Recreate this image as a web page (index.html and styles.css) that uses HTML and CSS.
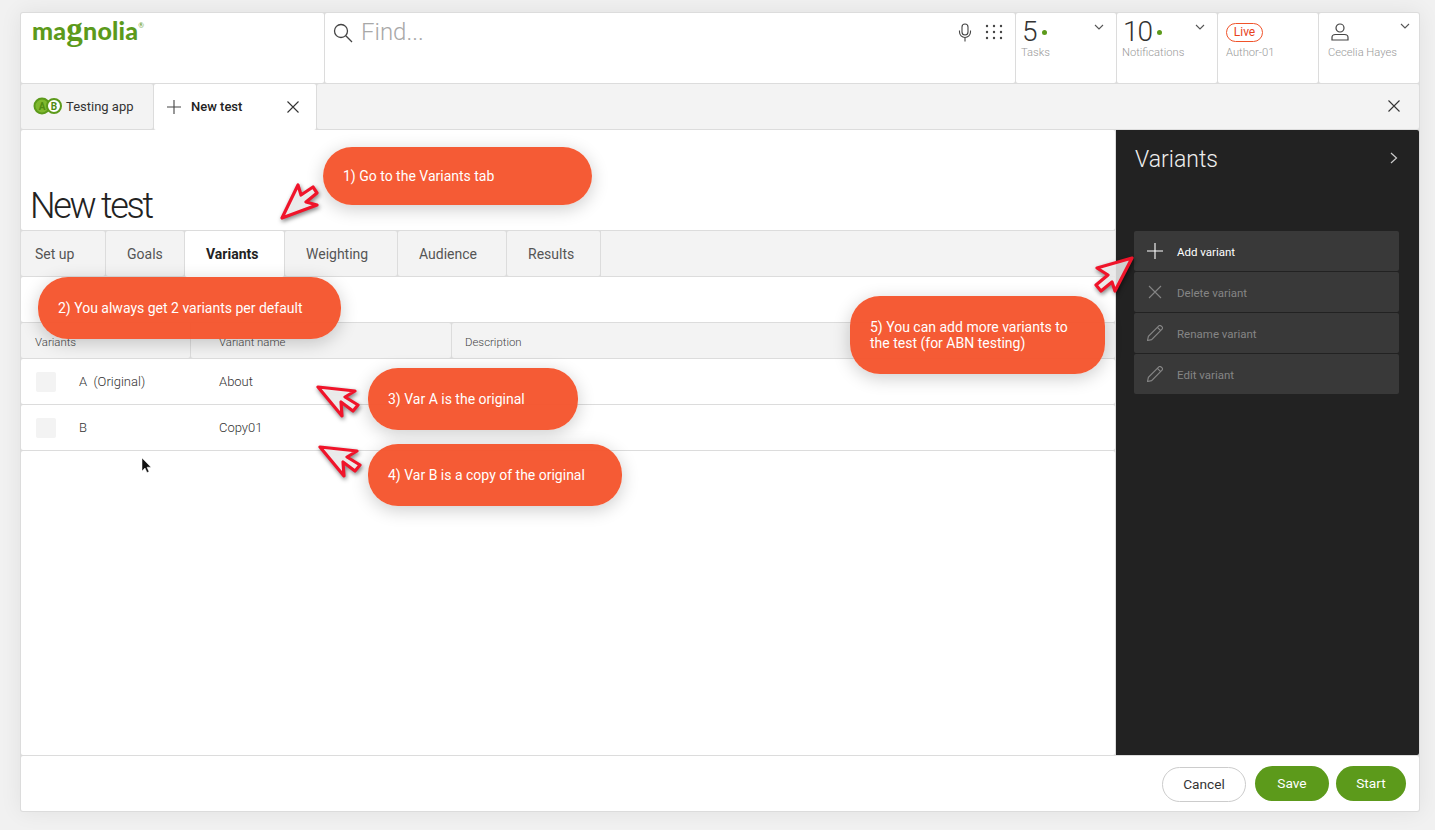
FILE: index.html
```html
<!DOCTYPE html>
<html lang="en">
<head>
<meta charset="utf-8">
<title>New test</title>
<link rel="stylesheet" href="styles.css">
</head>
<body>
<div class="frame">
  <header class="topbar">
    <div class="cell logo-cell">
      <div class="logo">ma<span class="logo-g">g</span>nolia<sup class="logo-r">®</sup></div>
    </div>
    <div class="cell search">
      <svg class="search-icon" width="20" height="20" viewBox="0 0 20 20"><circle cx="8" cy="8" r="6.5" fill="none" stroke="#444" stroke-width="1.3"/><path d="M12.8 12.8L19 19" stroke="#444" stroke-width="1.3" fill="none"/></svg>
      <span class="find">Find...</span>
      <svg class="mic" width="14" height="19" viewBox="0 0 14 19"><rect x="4" y="1" width="6" height="11" rx="3" fill="none" stroke="#444" stroke-width="1.1"/><path d="M1.5 7.5v1.5a5.500 5.500 0 0 0 11 0v-1.500M7 14.500v4" fill="none" stroke="#444" stroke-width="1.1"/></svg>
      <svg class="apps" width="18" height="16" viewBox="0 0 18 16"><g fill="#444"><circle cx="2" cy="2" r="1.200"/><circle cx="9" cy="2" r="1.200"/><circle cx="16" cy="2" r="1.200"/><circle cx="2" cy="8" r="1.200"/><circle cx="9" cy="8" r="1.200"/><circle cx="16" cy="8" r="1.200"/><circle cx="2" cy="14" r="1.200"/><circle cx="9" cy="14" r="1.200"/><circle cx="16" cy="14" r="1.200"/></g></svg>
    </div>
    <div class="cell stat">
      <div class="stat-top"><span class="num">5</span><span class="dot"></span><svg class="chev" width="10" height="6" viewBox="0 0 10 6"><path d="M1 1l4 4 4-4" fill="none" stroke="#555" stroke-width="1.100"/></svg></div>
      <div class="stat-label">Tasks</div>
    </div>
    <div class="cell stat">
      <div class="stat-top"><span class="num">10</span><span class="dot"></span><svg class="chev" width="10" height="6" viewBox="0 0 10 6"><path d="M1 1l4 4 4-4" fill="none" stroke="#555" stroke-width="1.100"/></svg></div>
      <div class="stat-label">Notifications</div>
    </div>
    <div class="cell stat stat-live">
      <div class="stat-top"><span class="live">Live</span></div>
      <div class="stat-label">Author-01</div>
    </div>
    <div class="cell stat stat-user">
      <div class="stat-top">
        <svg class="user" width="20" height="18" viewBox="0 0 20 18"><circle cx="10" cy="5" r="4" fill="none" stroke="#444" stroke-width="1.200"/><path d="M2 17v-2.500c0-2 1.500-3 3.500-3h9c2 0 3.500 1 3.500 3V17z" fill="none" stroke="#444" stroke-width="1.200"/></svg>
        <svg class="chev" width="10" height="6" viewBox="0 0 10 6"><path d="M1 1l4 4 4-4" fill="none" stroke="#555" stroke-width="1.100"/></svg>
      </div>
      <div class="stat-label">Cecelia Hayes</div>
    </div>
  </header>

  <nav class="apptabs">
    <div class="apptab apptab-app">
      <svg class="ab" width="30" height="18" viewBox="0 0 30 18">
        <circle cx="9" cy="9" r="7.500" fill="#7fb82e" stroke="#5c9a1b" stroke-width="2"/>
        <circle cx="21" cy="9" r="7" fill="#fff" stroke="#5c9a1b" stroke-width="2"/>
        <text x="9" y="12.500" class="ab-a">A</text>
        <text x="21" y="12.500" class="ab-b">B</text>
      </svg>
      <span>Testing app</span>
    </div>
    <div class="apptab apptab-active">
      <svg width="14" height="14" viewBox="0 0 14 14"><path d="M7 0v14M0 7h14" stroke="#444" stroke-width="1.100" fill="none"/></svg>
      <span class="apptab-title">New test</span>
      <svg class="x" width="12" height="12" viewBox="0 0 12 12"><path d="M.5.500l11 11M11.500.500l-11 11" stroke="#333" stroke-width="1.100" fill="none"/></svg>
    </div>
    <div class="apptab-rest">
      <svg width="12" height="12" viewBox="0 0 12 12"><path d="M.5.500l11 11M11.500.500l-11 11" stroke="#333" stroke-width="1.100" fill="none"/></svg>
    </div>
  </nav>

  <main class="workspace">
    <section class="content">
      <div class="title-row"><h1>New test</h1></div>
      <div class="subtabs">
        <div class="subtab subtab-first">Set up</div>
        <div class="subtab">Goals</div>
        <div class="subtab subtab-active">Variants</div>
        <div class="subtab">Weighting</div>
        <div class="subtab">Audience</div>
        <div class="subtab">Results</div>
        <div class="subtab-rest"></div>
      </div>
      <div class="spacer-row"></div>
      <div class="t-row t-head">
        <div class="th th-first">Variants</div>
        <div class="th th-pad">Variant name</div>
        <div class="th th-desc">Description</div>
      </div>
      <div class="t-row t-body">
        <div class="td td-first"><span class="check"></span><span>A&nbsp; (Original)</span></div>
        <div class="td td-name">About</div>
      </div>
      <div class="t-row t-body">
        <div class="td td-first"><span class="check"></span><span>B</span></div>
        <div class="td td-name">Copy01</div>
      </div>
      <div class="t-empty"></div>
    </section>
    <aside class="panel">
      <div class="panel-head">
        <span class="panel-title">Variants</span>
        <svg width="8" height="12" viewBox="0 0 8 12"><path d="M1 1l5.500 5-5.500 5" fill="none" stroke="#ccc" stroke-width="1.200"/></svg>
      </div>
      <div class="actions">
        <div class="action action-on"><svg width="16" height="16" viewBox="0 0 16 16"><path d="M8 0v16M0 8h16" stroke="#fff" stroke-width="1.100" fill="none"/></svg><span>Add variant</span></div>
        <div class="action"><svg width="16" height="16" viewBox="0 0 16 16"><path d="M2 2l12 12M14 2L2 14" stroke="#858585" stroke-width="1.100" fill="none"/></svg><span>Delete variant</span></div>
        <div class="action"><svg width="16" height="16" viewBox="0.5 0.500 15 15"><path d="M1 15l.8-3.800L11.600 1.400a1.500 1.500 0 0 1 2.100 0l.9.900a1.500 1.500 0 0 1 0 2.100L4.800 14.200zM10.300 2.700l3 3" stroke="#858585" stroke-width="1.100" fill="none"/></svg><span>Rename variant</span></div>
        <div class="action"><svg width="16" height="16" viewBox="0.5 0.500 15 15"><path d="M1 15l.8-3.800L11.600 1.400a1.500 1.500 0 0 1 2.100 0l.9.900a1.500 1.500 0 0 1 0 2.100L4.800 14.200zM10.300 2.700l3 3" stroke="#858585" stroke-width="1.100" fill="none"/></svg><span>Edit variant</span></div>
      </div>
    </aside>
  </main>

  <footer class="footer">
    <button class="btn btn-cancel">Cancel</button>
    <button class="btn btn-save">Save</button>
    <button class="btn btn-start">Start</button>
  </footer>
</div>

<div class="callout callout-1">1) Go to the Variants tab</div>
<div class="callout callout-2">2) You always get 2 variants per default</div>
<div class="callout callout-3">3) Var A is the original</div>
<div class="callout callout-4">4) Var B is a copy of the original</div>
<div class="callout callout-5">5) You can add more variants to the test (for ABN testing)</div>

<svg class="overlay" width="1435" height="830" viewBox="0 0 1435 830">
  <g class="arrows">
    <polygon points="282,218 298,185 301,195 313,187 317,193 306,202 317,205"/>
    <polygon points="318,387 355,391 345,397 358,405 353,411 341,402 342,416"/>
    <polygon points="320,447 357,451 347,457 360,465 355,471 343,462 344,476"/>
    <polygon points="1132,258 1097,268 1108,275 1096,285 1101,291 1112,282 1115,291"/>
  </g>
  <path class="cursor" d="M142 458v13l3-3 2 4.500 2-.800-2-4.500h4z"/>
</svg>
</body>
</html>
```
FILE: styles.css
```css
* { box-sizing: border-box; }
html, body { margin: 0; height: 100%; }
body {
  background: #f1f1f1;
  padding: 12px 15px 0 20px;
  font-family: Roboto, "Liberation Sans", sans-serif;
  color: #333;
  overflow: hidden;
  position: relative;
}
.frame {
  width: 1400px;
  height: 800px;
  background: #dcdcdc;
  padding: 1px;
  display: flex;
  flex-direction: column;
  gap: 1px;
  box-shadow: 0 0 22px rgba(0, 0, 0, .07);
  border-radius: 3px;
}
.topbar {
  height: 70px;
  display: grid;
  grid-template-columns: 303px 690px 100px 100px 100px 100px;
  gap: 1px;
}
.cell { background: #fff; border-radius: 2px; }
.logo-cell { padding: 2px 0 0 11px; }
.logo {
  font-family: Lato, sans-serif;
  font-weight: 900;
  font-size: 25px;
  line-height: 30px;
  color: #5c9a1b;
  letter-spacing: .2px;
  display: flex;
  align-items: baseline;
}
.logo-g { font-family: "Liberation Serif", serif; font-weight: 700; font-size: 33px; line-height: 20px; }
.logo-r { font-size: 7px; line-height: 7px; font-weight: 400; align-self: flex-start; margin-top: 7px; }
.search { display: flex; align-items: flex-start; padding: 10px 12px 0 8px; }
.search-icon { flex: none; }
.find { font-size: 24px; font-weight: 300; color: #a8a8a8; line-height: 18px; margin: 0 0 0 8px; flex: 1; }
.mic { margin: 0 13px 0 0; flex: none; }
.apps { margin-top: 1px; flex: none; }
.stat { padding: 6px 6px 0 5px; position: relative; }
.stat-top { height: 26px; display: flex; align-items: center; position: relative; }
.num { font-size: 28px; font-weight: 300; color: #333; line-height: 26px; margin-left: 1px; letter-spacing: -1px; }
.dot { width: 5px; height: 5px; border-radius: 50%; background: #5c9a1b; margin-left: 5px; }
.chev { position: absolute; right: 6px; top: 5px; }
.stat-label { font-size: 11.200px; font-weight: 300; color: #999; line-height: 14px; margin-top: 1px; }
.stat-live { padding-left: 8px; }
.stat-user { padding-left: 9px; }
.stat-user .chev { right: 3px; top: 4px; }
.user { margin-left: 2px; }
.live {
  border: 1px solid #f0532a;
  color: #e8431c;
  border-radius: 10px;
  font-size: 12px;
  line-height: 17px;
  height: 19px;
  width: 37px;
  text-align: center;
  margin-top: 1px;
}
.apptabs {
  height: 45px;
  display: grid;
  grid-template-columns: 132px 162px 1fr;
  gap: 1px;
}
.apptab { display: flex; align-items: center; border-radius: 2px; font-size: 13px; padding-bottom: 1px; }
.apptab-app { background: #f3f3f3; padding-left: 12px; gap: 3px; color: #333; font-weight: 400; }
.ab { flex: none; }
.ab-a, .ab-b { font-size: 10px; font-weight: 700; text-anchor: middle; }
.ab-a { fill: #4f8a12; }
.ab-b { fill: #4f8a12; }
.apptab-active { background: #fff; padding: 0 17px 1px 13px; margin-bottom: -1px; position: relative; }
.apptab-title { margin-left: 10px; font-weight: 500; color: #222; flex: 1; }
.apptab-rest { background: #f3f3f3; border-radius: 2px; display: flex; align-items: center; justify-content: flex-end; padding: 0 19px 1px 0; }
.workspace { flex: 1; display: grid; grid-template-columns: 1095px 303px; min-height: 0; }
.content { display: flex; flex-direction: column; gap: 1px; background: #dcdcdc; padding-right: 1px; }
.title-row { height: 100px; background: #fff; border-radius: 2px; display: flex; align-items: flex-end; padding: 0 0 2px 9px; }
h1 { margin: 0; font-size: 36px; font-weight: 300; letter-spacing: -2.300px; color: #222; line-height: 44px; }
.subtabs {
  height: 45px;
  display: grid;
  grid-template-columns: 84px 78px 99px 112px 108px 93px 1fr;
  gap: 1px;
}
.subtab {
  background: #f3f3f3;
  border-radius: 2px;
  font-size: 14px;
  font-weight: 400;
  color: #555;
  display: flex;
  align-items: center;
  padding-left: 21px;
}
.subtab-first { padding-left: 14px; }
.subtab-active { background: #fff; color: #222; font-weight: 700; margin-bottom: -1px; }
.subtab-rest { background: #f3f3f3; }
.spacer-row { height: 45px; background: #fff; border-radius: 2px; }
.t-row { display: grid; grid-template-columns: 169px 260px 1fr; gap: 1px; }
.t-head { height: 35px; }
.th { background: #f3f3f3; border-radius: 2px; font-size: 11.400px; font-weight: 300; color: #444; display: flex; align-items: center; padding-top: 3px; }
.th-first { padding-left: 14px; }
.th-pad { padding-left: 28px; }
.th-desc { padding-left: 13px; }
.t-body { height: 45px; background: #fff; border-radius: 2px; gap: 0; grid-template-columns: 198px 1fr; }
.td { font-size: 13px; font-weight: 300; color: #333; display: flex; align-items: center; }
.td-first { padding-left: 15px; gap: 23px; }
.check { width: 20px; height: 20px; background: #f3f3f3; border-radius: 2px; flex: none; }
.t-empty { flex: 1; background: #fff; border-radius: 2px; }
.panel { background: #222; border-radius: 0 2px 2px 0; padding: 0 20px 0 18px; }
.panel-head { height: 101px; display: flex; justify-content: space-between; align-items: flex-start; padding: 16px 1px 0 1px; }
.panel-head svg { margin-top: 6px; }
.panel-title { font-size: 23px; font-weight: 300; color: #eee; line-height: 28px; }
.actions { display: flex; flex-direction: column; gap: 1px; width: 265px; }
.action {
  height: 40px;
  background: #393939;
  border-radius: 2px;
  display: flex;
  align-items: center;
  padding-left: 13px;
  gap: 14px;
  font-size: 11.500px;
  color: #858585;
}
.action span { padding-top: 2px; }
.action-on { color: #fff; }
.footer {
  height: 55px;
  background: #fff;
  border-radius: 2px;
  display: flex;
  justify-content: flex-end;
  align-items: flex-start;
  padding: 10px 13px 0 0;
}
.btn {
  height: 35px;
  border-radius: 18px;
  font-family: Roboto, "Liberation Sans", sans-serif;
  font-size: 13.700px;
  padding: 0 0 2px;
  border: 0;
}
.btn-cancel { width: 84px; background: #fff; border: 1px solid #ccc; color: #333; margin: 1px 9px 0 0; }
.btn-save { width: 74px; background: #5c9a1b; color: #fff; margin-right: 7px; }
.btn-start { width: 70px; background: #5c9a1b; color: #fff; }
.callout {
  position: absolute;
  background: rgba(245, 86, 46, .97);
  color: #fff;
  font-size: 14px;
  line-height: 16px;
  border-radius: 30px;
  display: flex;
  align-items: center;
  padding: 0 20px;
  box-shadow: 0 4px 18px rgba(0, 0, 0, .2);
}
.callout-1 { left: 323px; top: 147px; width: 269px; height: 58px; }
.callout-2 { left: 38px; top: 277px; width: 303px; height: 62px; }
.callout-3 { left: 368px; top: 368px; width: 210px; height: 62px; }
.callout-4 { left: 368px; top: 444px; width: 254px; height: 62px; }
.callout-5 { left: 850px; top: 296px; width: 255px; height: 78px; }
.overlay { position: absolute; left: 0; top: 0; pointer-events: none; }
.arrows polygon {
  fill: rgba(255, 255, 255, .8);
  stroke: #f0142a;
  stroke-width: 3.200;
  stroke-linejoin: round;
  filter: drop-shadow(1px 2px 2px rgba(0, 0, 0, .5));
}
.cursor { fill: #111; stroke: #fff; stroke-width: .5; }
```
